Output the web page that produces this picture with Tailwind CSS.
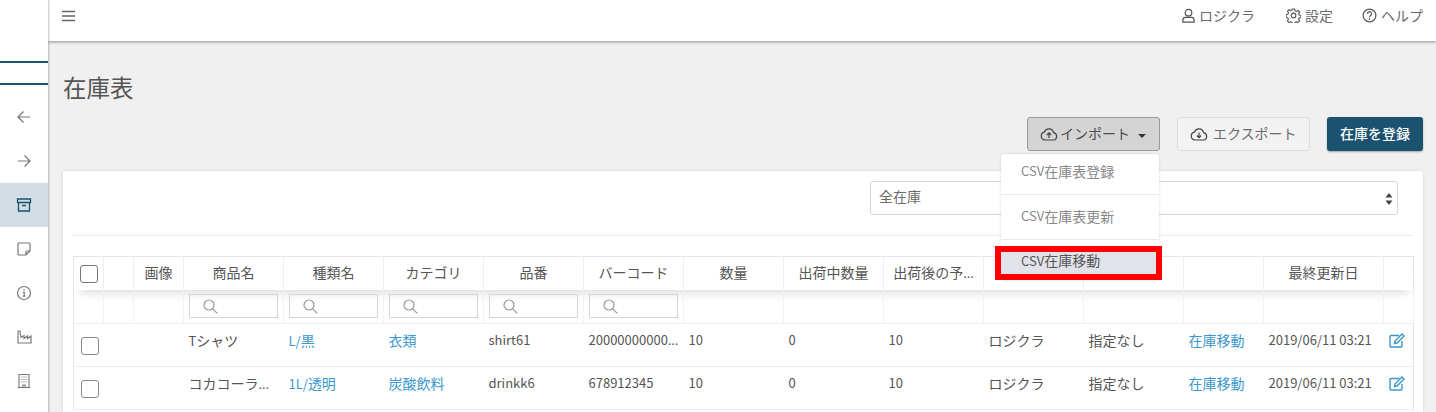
<!DOCTYPE html>
<html lang="ja">

<head>
    <meta charset="UTF-8">
    <title>在庫表</title>
    <script src="https://cdn.jsdelivr.net/npm/@tailwindcss/browser@4"></script>
</head>

<body class="h-[412px] w-[1436px] overflow-hidden bg-[#f0f0f0] font-['Noto_Sans_CJK_JP','Noto_Sans',sans-serif] text-[#555]">
    <div class="flex h-[412px]">
        <!-- sidebar -->
        <div class="relative z-10 flex h-[412px] w-[48px] shrink-0 flex-col bg-white shadow-[1px_0_2px_rgba(0,0,0,0.25)]">
            <div class="h-[61px]"></div>
            <div class="h-[24px] border-y-2 border-[#1a5270]"></div>
            <div class="h-[10px]"></div>
            <div class="flex h-[44px] items-center justify-center text-[#777]">
                <svg width="16" height="16" viewBox="0 0 16 16" fill="none" stroke="currentColor" stroke-width="1.2"><path d="M14 8H2M7.500 2.500 2 8l5.500 5.500" /></svg>
            </div>
            <div class="flex h-[44px] items-center justify-center text-[#777]">
                <svg width="16" height="16" viewBox="0 0 16 16" fill="none" stroke="currentColor" stroke-width="1.2"><path d="M2 8h12M8.500 2.500 14 8l-5.500 5.500" /></svg>
            </div>
            <div class="flex h-[44px] items-center justify-center bg-[#d1dce3] text-[#1a5270]">
                <svg width="16" height="16" viewBox="0 0 16 16" fill="none" stroke="currentColor" stroke-width="1.3"><path d="M1.500 2h13v3.500h-13zM2.500 5.500V14h11V5.500M6 8.500h4" /></svg>
            </div>
            <div class="flex h-[44px] items-center justify-center text-[#777]">
                <svg width="16" height="16" viewBox="0 0 16 16" fill="none" stroke="currentColor" stroke-width="1.2"><path d="M3 2h10a1 1 0 0 1 1 1v7l-4 4H3a1 1 0 0 1-1-1V3a1 1 0 0 1 1-1zM14 10h-3a1 1 0 0 0-1 1v3" /></svg>
            </div>
            <div class="flex h-[44px] items-center justify-center text-[#777]">
                <svg width="16" height="16" viewBox="0 0 16 16" fill="none" stroke="currentColor" stroke-width="1.2"><circle cx="8" cy="8" r="6.500" /><path d="M7 7.200h1.200v4M6.800 11.200h2.600" /><circle cx="8" cy="4.800" r=".8" fill="currentColor" stroke="none" /></svg>
            </div>
            <div class="flex h-[44px] items-center justify-center text-[#777]">
                <svg width="16" height="16" viewBox="0 0 16 16" fill="none" stroke="currentColor" stroke-width="1.2"><path d="M2 2v12h13V7l-3.500 2.500V7L8 9.500V6.500L5 8.500 4 2z" /></svg>
            </div>
            <div class="flex h-[44px] items-center justify-center text-[#777]">
                <svg width="16" height="16" viewBox="0 0 16 16" fill="none" stroke="currentColor" stroke-width="1.1"><path d="M3 14.500V1.500h10v13M1.500 14.500h13M6.800 14.500v-2.500h2.400v2.500M5.500 4h1M7.500 4h1M9.500 4h1M5.500 6.500h1M7.500 6.500h1M9.500 6.500h1M5.500 9h1M7.500 9h1M9.500 9h1" /></svg>
            </div>
        </div>

        <div class="relative flex min-w-0 grow flex-col">
            <!-- header -->
            <div class="relative z-[5] flex h-[41px] shrink-0 items-start justify-between bg-white pl-[14px] pr-[13px] shadow-[0_1px_3px_rgba(0,0,0,0.4)]">
                <svg class="mt-[10px]" width="13" height="12" viewBox="0 0 13 12" fill="none" stroke="#666" stroke-width="1.3"><path d="M0 1.500h13M0 6h13M0 10.500h13" /></svg>
                <div class="mt-[5px] flex items-center text-[14px] leading-5 text-[#6b6b6b]">
                    <svg width="15" height="15" viewBox="0 0 16 16" fill="none" stroke="#555" stroke-width="1.3"><circle cx="8" cy="5" r="3.500" /><path d="M2 15v-2a3 3 0 0 1 3-3h6a3 3 0 0 1 3 3v2z" /></svg>
                    <span class="ml-[3px]">ロジクラ</span>
                    <svg class="ml-[31px]" width="15" height="15" viewBox="0 0 16 16" fill="none" stroke="#555" stroke-width="1.2"><circle cx="8" cy="8" r="2.500" /><path d="M6.800 1h2.400l.4 2 1.500.7 1.800-1 1.600 1.700-1.100 1.700.7 1.500 1.900.4v2.300l-1.900.4-.7 1.500 1.100 1.700-1.600 1.700-1.800-1-1.500.7-.4 1.900H6.800l-.4-1.900-1.500-.7-1.800 1-1.600-1.700 1.100-1.700-.7-1.500L.1 9.300V7l1.900-.4.700-1.500-1.100-1.700 1.600-1.700 1.800 1 1.500-.7z" /></svg>
                    <span class="ml-[4px]">設定</span>
                    <svg class="ml-[29px]" width="15" height="15" viewBox="0 0 16 16" fill="none" stroke="#555" stroke-width="1.3"><circle cx="8" cy="8" r="6.800" /><path d="M5.800 6.200a2.200 2.200 0 1 1 3.300 1.900c-.7.400-1.100.9-1.100 1.700" /><circle cx="8" cy="11.800" r=".9" fill="#555" stroke="none" /></svg>
                    <span class="ml-[4px]">ヘルプ</span>
                </div>
            </div>

            <!-- content -->
            <div class="relative min-h-0 grow pl-[15px] pr-[13px]">
                <h1 class="mt-[28px] h-[36px] text-[23.500px] leading-[36px] font-normal text-[#555]">在庫表</h1>
                <div class="mt-[12px] flex h-[34px] justify-end gap-[17px] text-[14px] leading-[32px]">
                    <button class="flex w-[133px] items-center rounded-[3px] border border-[#999] bg-[#d4d4d4] pl-[12px] text-[#4d4d4d]">
                        <svg width="18" height="14" viewBox="0 0 18 14" fill="none" stroke="#444" stroke-width="1.2"><path d="M5 13a4 4 0 0 1-.6-7.900 4.800 4.800 0 0 1 9.200.6A3.700 3.700 0 0 1 13.500 13z" /><path d="M9 11V6M6.800 8 9 5.800 11.200 8" /></svg>
                        <span class="ml-[2px] -translate-y-px">インポート</span>
                        <span class="ml-[8px] mt-[3px] h-0 w-0 border-x-[4px] border-t-[4px] border-x-transparent border-t-[#333]"></span>
                    </button>
                    <button class="flex w-[133px] items-center rounded-[3px] border border-[#ddd] bg-[#f2f2f2] pl-[12px] text-[#6b6b6b]">
                        <svg width="18" height="14" viewBox="0 0 18 14" fill="none" stroke="#444" stroke-width="1.2"><path d="M5 13a4 4 0 0 1-.6-7.900 4.800 4.800 0 0 1 9.200.6A3.700 3.700 0 0 1 13.500 13z" /><path d="M9 5.500v5M6.800 8.500 9 10.700l2.200-2.200" /></svg>
                        <span class="ml-[5px] -translate-y-px">エクスポート</span>
                    </button>
                    <button class="w-[96px] rounded-[3px] bg-[#1a5270] font-medium text-white shadow-[0_1px_2px_rgba(0,0,0,0.3)]"><span class="block -translate-y-px">在庫を登録</span></button>
                </div>

                <!-- card -->
                <div class="mt-[20px] h-[241px] overflow-hidden rounded-t-[3px] bg-white px-[10px] pt-[10px] shadow-[0_0_3px_rgba(0,0,0,0.12)]">
                    <div class="flex justify-end pr-[15px]">
                        <div class="relative flex h-[34px] w-[528px] items-center rounded-[3px] border border-[#d5d5de] px-[8px] pb-[4px] text-[14px] text-[#6b6b6b]">
                            全在庫
                            <svg class="absolute right-[4px] top-[10px]" width="8" height="14" viewBox="0 0 8 14" fill="#444"><path d="M4 1 7.500 5.500h-7zM4 13 .5 8.500h7z" /></svg>
                        </div>
                    </div>
                    <div class="mt-[20px] h-px bg-[#e8e8e8]"></div>
                    <table class="mt-[20px] w-[1340px] table-fixed border-collapse border border-[#e4e4e4] text-[14px] leading-5">
                        <colgroup>
                            <col class="w-[30px]">
                            <col class="w-[30px]">
                            <col class="w-[50px]">
                            <col class="w-[100px]">
                            <col class="w-[100px]">
                            <col class="w-[100px]">
                            <col class="w-[100px]">
                            <col class="w-[100px]">
                            <col class="w-[100px]">
                            <col class="w-[100px]">
                            <col class="w-[100px]">
                            <col class="w-[100px]">
                            <col class="w-[100px]">
                            <col class="w-[80px]">
                            <col class="w-[120px]">
                            <col class="w-[30px]">
                        </colgroup>
                        <thead>
                            <tr class="h-[33px] shadow-[0_9px_10px_-6px_rgba(0,0,0,0.14)]">
                                <th class="border-r border-[#eee] pl-[6px] text-left"><span class="mt-[2px] block h-[18px] w-[18px] rounded-[3px] border-[1.500px] border-[#777] bg-white"></span></th>
                                <th class="border-r border-[#eee]"></th>
                                <th class="border-r border-[#eee] pb-[2px] font-normal">画像</th>
                                <th class="border-r border-[#eee] pb-[2px] font-normal">商品名</th>
                                <th class="border-r border-[#eee] pb-[2px] font-normal">種類名</th>
                                <th class="border-r border-[#eee] pb-[2px] font-normal">カテゴリ</th>
                                <th class="border-r border-[#eee] pb-[2px] font-normal">品番</th>
                                <th class="border-r border-[#eee] pb-[2px] font-normal">バーコード</th>
                                <th class="border-r border-[#eee] pb-[2px] font-normal">数量</th>
                                <th class="border-r border-[#eee] pb-[2px] font-normal">出荷中数量</th>
                                <th class="border-r border-[#eee] pb-[2px] font-normal whitespace-nowrap">出荷後の予<span class="font-['Noto_Sans'] text-[13px]">...</span></th>
                                <th class="border-r border-[#eee]"></th>
                                <th class="border-r border-[#eee]"></th>
                                <th class="border-r border-[#eee]"></th>
                                <th class="border-r border-[#eee] pb-[2px] font-normal">最終更新日</th>
                                <th></th>
                            </tr>
                        </thead>
                        <tbody>
                            <tr class="h-[34px] border-b border-[#eee]">
                                <td class="border-r border-[#f2f2f2]"></td>
                                <td class="border-r border-[#f2f2f2]"></td>
                                <td class="border-r border-[#f2f2f2]"></td>
                                <td class="border-r border-[#f2f2f2] px-[5px]"><div class="flex h-[24px] w-[89px] items-center border border-[#d5d5e2] pl-[13px]"><svg width="15" height="15" viewBox="0 0 15 15" fill="none" stroke="#999" stroke-width="1.2"><circle cx="6" cy="6" r="5" /><path d="m9.800 9.800 4.500 4.500" /></svg></div></td>
                                <td class="border-r border-[#f2f2f2] px-[5px]"><div class="flex h-[24px] w-[89px] items-center border border-[#d5d5e2] pl-[13px]"><svg width="15" height="15" viewBox="0 0 15 15" fill="none" stroke="#999" stroke-width="1.2"><circle cx="6" cy="6" r="5" /><path d="m9.800 9.800 4.500 4.500" /></svg></div></td>
                                <td class="border-r border-[#f2f2f2] px-[5px]"><div class="flex h-[24px] w-[89px] items-center border border-[#d5d5e2] pl-[13px]"><svg width="15" height="15" viewBox="0 0 15 15" fill="none" stroke="#999" stroke-width="1.2"><circle cx="6" cy="6" r="5" /><path d="m9.800 9.800 4.500 4.500" /></svg></div></td>
                                <td class="border-r border-[#f2f2f2] px-[5px]"><div class="flex h-[24px] w-[89px] items-center border border-[#d5d5e2] pl-[13px]"><svg width="15" height="15" viewBox="0 0 15 15" fill="none" stroke="#999" stroke-width="1.2"><circle cx="6" cy="6" r="5" /><path d="m9.800 9.800 4.500 4.500" /></svg></div></td>
                                <td class="border-r border-[#f2f2f2] px-[5px]"><div class="flex h-[24px] w-[89px] items-center border border-[#d5d5e2] pl-[13px]"><svg width="15" height="15" viewBox="0 0 15 15" fill="none" stroke="#999" stroke-width="1.2"><circle cx="6" cy="6" r="5" /><path d="m9.800 9.800 4.500 4.500" /></svg></div></td>
                                <td class="border-r border-[#f2f2f2]"></td>
                                <td class="border-r border-[#f2f2f2]"></td>
                                <td class="border-r border-[#f2f2f2]"></td>
                                <td class="border-r border-[#f2f2f2]"></td>
                                <td class="border-r border-[#f2f2f2]"></td>
                                <td class="border-r border-[#f2f2f2]"></td>
                                <td class="border-r border-[#f2f2f2]"></td>
                                <td class="border-r border-[#f2f2f2]"></td>
                            </tr>
                            <tr class="h-[43px] border-b border-[#eee] align-top">
                                <td class="pl-[7px] pt-[13px]" colspan="3"><span class="block h-[18px] w-[18px] rounded-[3px] border-[1.500px] border-[#888]"></span></td>
                                <td class="whitespace-nowrap px-[5px] pt-[6px]"><span class="text-[13px]">T</span>シャツ</td>
                                <td class="whitespace-nowrap px-[5px] pt-[6px] text-[#3a97cb]"><span class="text-[13px]">L/</span>黒</td>
                                <td class="whitespace-nowrap px-[5px] pt-[6px] text-[#3a97cb]">衣類</td>
                                <td class="whitespace-nowrap px-[5px] pt-[6px] text-[13px]">shirt61</td>
                                <td class="whitespace-nowrap px-[5px] pt-[6px] text-[13px]">20000000000<span class="font-['Noto_Sans']">...</span></td>
                                <td class="whitespace-nowrap px-[5px] pt-[6px] text-[13px]">10</td>
                                <td class="whitespace-nowrap px-[5px] pt-[6px] text-[13px]">0</td>
                                <td class="whitespace-nowrap px-[5px] pt-[6px] text-[13px]">10</td>
                                <td class="whitespace-nowrap px-[5px] pt-[6px]">ロジクラ</td>
                                <td class="whitespace-nowrap px-[5px] pt-[6px]">指定なし</td>
                                <td class="whitespace-nowrap px-[5px] pt-[6px] text-[#3a97cb]">在庫移動</td>
                                <td class="whitespace-nowrap px-[5px] pt-[6px] text-[13px]">2019/06/11 03:21</td>
                                <td class="pl-[5px] pt-[9px]"><svg width="16" height="15" viewBox="0 0 16 15" fill="none" stroke="#3a97cb" stroke-width="1.4"><path d="M10 2.500H2a1 1 0 0 0-1 1V13a1 1 0 0 0 1 1h10a1 1 0 0 0 1-1V8" /><path d="M5.500 10.500 6 8l7-7 2 2-7 7z" /></svg></td>
                            </tr>
                            <tr class="h-[43px] border-b border-[#eee] align-top">
                                <td class="pl-[7px] pt-[13px]" colspan="3"><span class="block h-[18px] w-[18px] rounded-[3px] border-[1.500px] border-[#888]"></span></td>
                                <td class="whitespace-nowrap px-[5px] pt-[6px]">コカコーラ<span class="font-['Noto_Sans'] text-[13px]">...</span></td>
                                <td class="whitespace-nowrap px-[5px] pt-[6px] text-[#3a97cb]"><span class="text-[13px]">1L/</span>透明</td>
                                <td class="whitespace-nowrap px-[5px] pt-[6px] text-[#3a97cb]">炭酸飲料</td>
                                <td class="whitespace-nowrap px-[5px] pt-[6px] text-[13px]">drinkk6</td>
                                <td class="whitespace-nowrap px-[5px] pt-[6px] text-[13px]">678912345</td>
                                <td class="whitespace-nowrap px-[5px] pt-[6px] text-[13px]">10</td>
                                <td class="whitespace-nowrap px-[5px] pt-[6px] text-[13px]">0</td>
                                <td class="whitespace-nowrap px-[5px] pt-[6px] text-[13px]">10</td>
                                <td class="whitespace-nowrap px-[5px] pt-[6px]">ロジクラ</td>
                                <td class="whitespace-nowrap px-[5px] pt-[6px]">指定なし</td>
                                <td class="whitespace-nowrap px-[5px] pt-[6px] text-[#3a97cb]">在庫移動</td>
                                <td class="whitespace-nowrap px-[5px] pt-[6px] text-[13px]">2019/06/11 03:21</td>
                                <td class="pl-[5px] pt-[9px]"><svg width="16" height="15" viewBox="0 0 16 15" fill="none" stroke="#3a97cb" stroke-width="1.4"><path d="M10 2.500H2a1 1 0 0 0-1 1V13a1 1 0 0 0 1 1h10a1 1 0 0 0 1-1V8" /><path d="M5.500 10.500 6 8l7-7 2 2-7 7z" /></svg></td>
                            </tr>
                        </tbody>
                    </table>
                </div>

                <!-- import menu -->
                <div class="absolute left-[953px] top-[113px] z-20 w-[158px] rounded-[3px] bg-white text-[14px] text-[#888] shadow-[0_0_3px_rgba(0,0,0,0.15)]">
                    <div class="flex h-[41px] items-center border-b border-[#e8e8ee] pb-[6px] pl-[20px]"><span class="text-[13px]">CSV</span>在庫表登録</div>
                    <div class="flex h-[45px] items-center border-b border-[#e8e8ee] pb-[2px] pl-[20px]"><span class="text-[13px]">CSV</span>在庫表更新</div>
                    <div class="mt-[12px] flex h-[22px] items-center bg-[#e1e2ea] pb-[5px] pl-[20px] text-[#555]"><span class="text-[13px]">CSV</span>在庫移動</div>
                    <div class="h-[6px]"></div>
                </div>
                <!-- red callout -->
                <div class="absolute left-[947px] top-[205px] z-30 h-[34px] w-[167px] border-[6px] border-[#ff0000]"></div>
            </div>
        </div>
    </div>
</body>

</html>
